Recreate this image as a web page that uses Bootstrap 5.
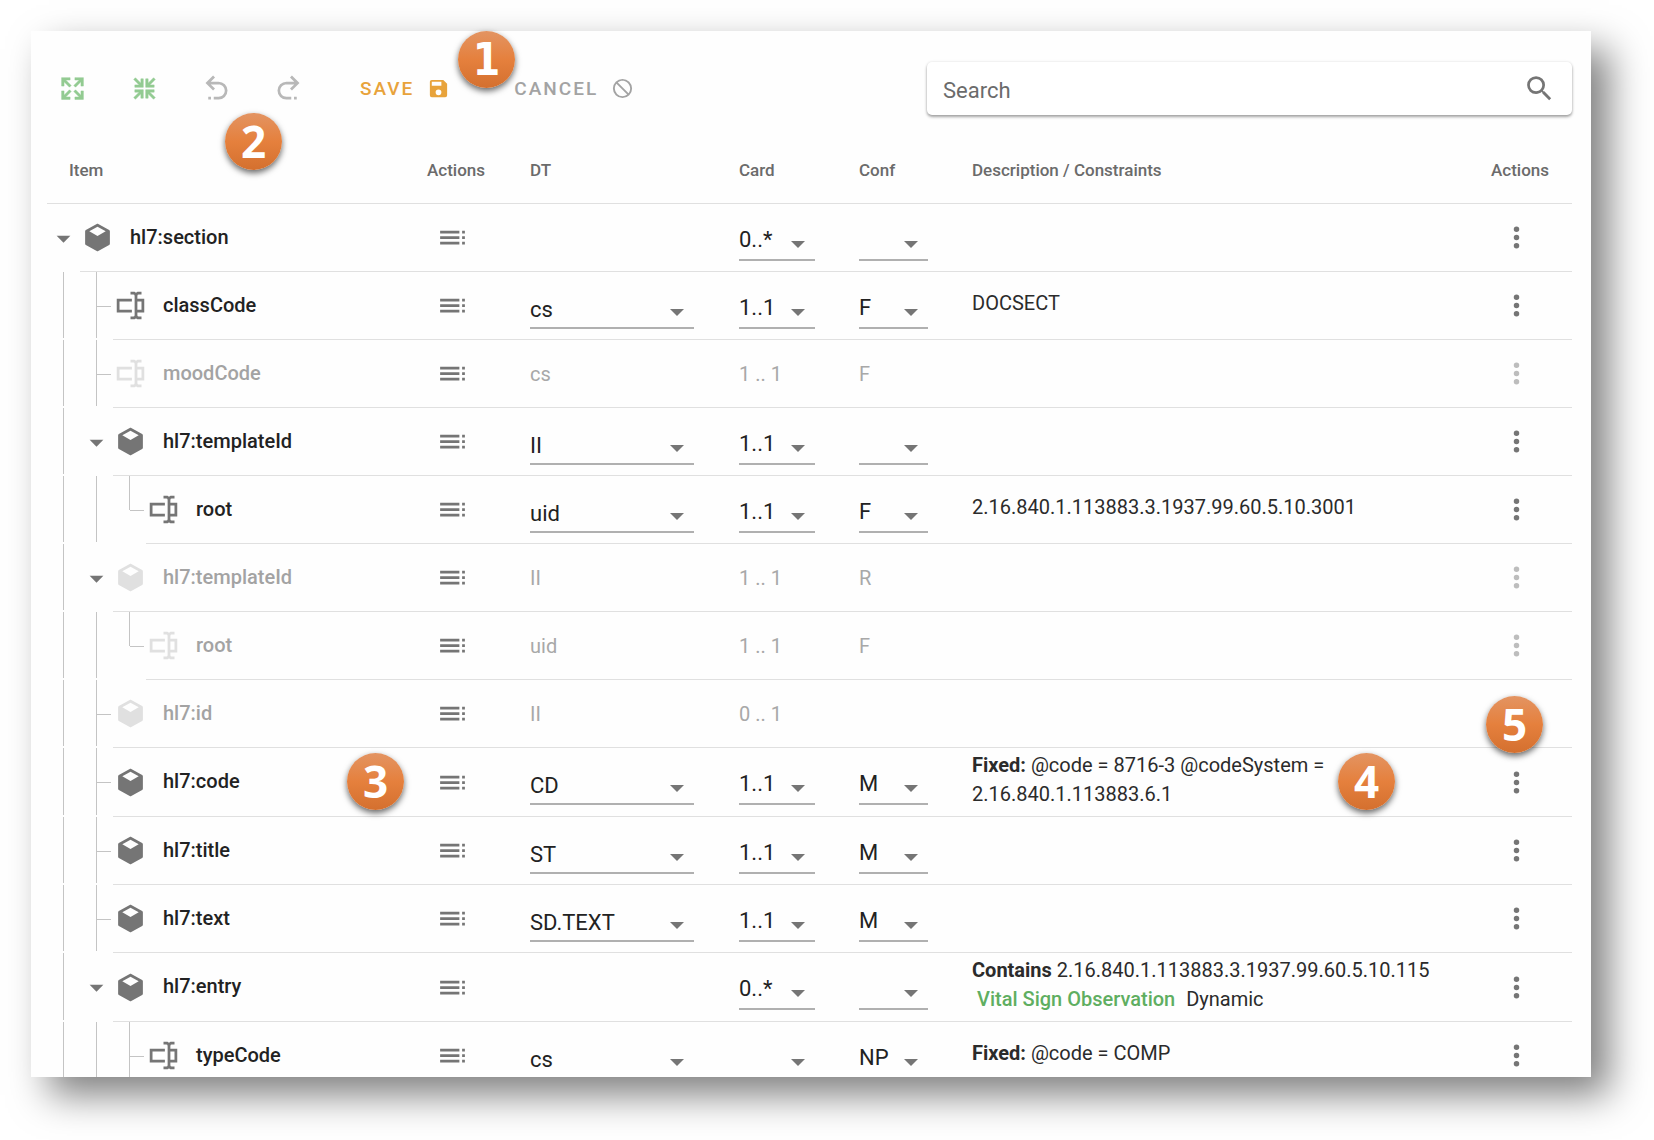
<!DOCTYPE html>
<html lang="en">
<head>
<meta charset="utf-8">
<meta name="viewport" content="width=device-width, initial-scale=1">
<title>Template editor</title>
<link href="https://cdn.jsdelivr.net/npm/bootstrap@5.3.0/dist/css/bootstrap.min.css" rel="stylesheet">
<style>
body{font-family:Roboto,"Liberation Sans",sans-serif;color:#222;background:#fff}
.stage{height:100vh;padding:31px 63px 63px 31px}
.sheet{background:#fefefe;box-shadow:18px 18px 36px rgba(0,0,0,.5)}
.sheet-body{padding:31px 19px 0 16px}
.ico{width:33px;height:33px;fill:currentColor;flex:none;display:block}
.ico-md{width:29px;height:29px}
.ico-sm{width:23px;height:23px}
.tools{padding-bottom:20px}
.tool{width:72px;border:0;background:none;padding:0;display:flex;justify-content:center}
.tool:first-child{margin-left:-11px}
.c-green{color:#93cb92}
.c-grey{color:#b8b8b8}
.txt-btn{border:0;background:none;padding:0;font-size:19px;line-height:24px;font-weight:500;letter-spacing:2px;display:flex;align-items:center;gap:13px}
.save{color:#e8a33b;margin-left:36px}
.cancel{color:#a3a3a3;margin-left:64px}
.find{width:645px;height:53px;border-radius:5px;background:#fff;padding:0 16px;box-shadow:0 2px 3px rgba(0,0,0,.35),0 0 3px rgba(0,0,0,.1);color:#757575}
.find input{border:0;outline:0;background:none;font-size:22px;line-height:30px;color:#333}
.find input::placeholder{color:#6b6b6b;opacity:1}
.find button{border:0;background:none;padding:0;color:#757575}
.tree{width:100%;table-layout:fixed;border-collapse:separate;border-spacing:0}
.tree th{height:69px;padding:2px 0 0 16px;font-size:17px;line-height:24px;font-weight:500;color:#6b6b6b;border-bottom:1px solid #e0e0e0}
.tree th:first-child{padding-left:22px}
.tree td{height:68px;padding:0 0 0 16px;border-bottom:1px solid #e0e0e0;vertical-align:middle}
.tree td:first-child{padding:0;border:0}
.c-item{width:364px}.c-act{width:103px}.c-dt{width:209px}.c-card{width:120px}.c-conf{width:113px}.c-more{width:97px}
.node{height:100%;display:flex;align-items:stretch}
.name{flex:1;display:flex;align-items:center;gap:16px;border-bottom:1px solid #e0e0e0;font-size:20px;line-height:28px;font-weight:500;color:#222;padding-left:1px}
.name span{padding-bottom:2px}
.name .ico{color:#757575}
.guide,.leaf,.end,.toggle{width:33px;flex:none;padding:0;border:0;background:none}
.guide,.leaf{background:linear-gradient(#c4c4c4,#c4c4c4) 16px 0/1px calc(100% - 2px) no-repeat}
.leaf{background:linear-gradient(#c4c4c4,#c4c4c4) 16px 0/1px calc(100% - 2px) no-repeat,linear-gradient(#c4c4c4,#c4c4c4) 17px 50%/14px 1px no-repeat}
.end{background:linear-gradient(#c4c4c4,#c4c4c4) 16px 0/1px 50% no-repeat,linear-gradient(#c4c4c4,#c4c4c4) 17px 50%/14px 1px no-repeat}
.toggle{color:#757575;display:flex;align-items:center}
.off .name{color:#a3a3a3}
.off .name .ico{color:#e0e0e0}
.off td{color:#a8a8a8;font-size:20px;line-height:28px}
.act{border:0;background:none;padding:0;color:#757575;display:block;margin-left:9px}
.off .act.more{color:#bdbdbd}
.pick{position:relative;display:block;height:36px;margin-top:10px;border-bottom:2px solid #b0b0b0}
.pick::after{content:"";position:absolute;right:10px;top:16px;border:7px solid transparent;border-top-color:#757575;border-bottom:0;pointer-events:none}
.pick select{appearance:none;border:0;outline:0;background:none;padding:0;width:100%;font-size:22px;line-height:30px;height:30px;color:#222;display:block}
.pick-dt{width:164px}.pick-card{width:76px}.pick-conf{width:69px}
.pick-dt select{height:34px}
.tree td.desc{font-size:20px;line-height:29px;padding:3px 0 7px 16px;color:#2b2b2b}
.desc b{font-weight:700}
.desc a{color:#5fae61;font-weight:500;text-decoration:none;margin:0 6px 0 5px}
.callout-dot{position:absolute;width:57px;height:57px;border-radius:50%;background:linear-gradient(#e39462,#e5803d 50%,#d4702f);color:#fff;font:700 44px/57px "Open Sans","Noto Sans",sans-serif;text-align:center;box-shadow:0 3px 6px rgba(0,0,0,.6)}
.dot-1{left:427px;top:0;font-family:"DejaVu Sans Condensed",Lato,sans-serif}
.dot-2{left:194px;top:82px}
.dot-3{left:316px;top:722px}
.dot-4{right:196px;top:722px}
.dot-5{right:48px;top:665px}
</style>
<script src="https://cdn.jsdelivr.net/npm/bootstrap@5.3.0/dist/js/bootstrap.bundle.min.js"></script>
</head>
<body>
<svg class="d-none" aria-hidden="true">
<symbol id="cube" viewBox="0 0 24 24"><path d="M21 16.5c0 .38-.21.71-.53.88l-7.9 4.44c-.16.12-.36.18-.57.18s-.41-.06-.57-.18l-7.9-4.44A.99.99 0 0 1 3 16.5v-9c0-.38.21-.71.53-.88l7.9-4.44c.16-.12.36-.18.57-.18s.41.06.57.18l7.9 4.44c.32.17.53.5.53.88v9M12 4.15 6.04 7.5 12 10.85l5.96-3.35L12 4.15z"/></symbol>
<symbol id="attr" viewBox="0 0 24 24"><path d="M17 7h5v10h-5v2a1 1 0 0 0 1 1h2v2h-2.5c-.55 0-1.5-.45-1.5-1 0 .55-.95 1-1.5 1H12v-2h2a1 1 0 0 0 1-1V5a1 1 0 0 0-1-1h-2V2h2.500c.55 0 1.5.45 1.500 1 0-.55.95-1 1.500-1H20v2h-2a1 1 0 0 0-1 1v2M2 7h11v2H4v6h9v2H2V7m18 8V9h-3v6h3z"/></symbol>
<symbol id="down" viewBox="0 0 24 24"><path d="m7 10 5 5 5-5H7z"/></symbol>
<symbol id="toc" viewBox="0 0 24 24"><path d="M3 9h14V7H3v2zm0 4h14v-2H3v2zm0 4h14v-2H3v2zm16 0h2v-2h-2v2zm0-10v2h2V7h-2zm0 6h2v-2h-2v2z"/></symbol>
<symbol id="dots" viewBox="0 0 24 24"><path d="M12 16a2 2 0 1 1 0 4 2 2 0 0 1 0-4m0-6a2 2 0 1 1 0 4 2 2 0 0 1 0-4m0-6a2 2 0 1 1 0 4 2 2 0 0 1 0-4z"/></symbol>
<symbol id="undo" viewBox="0 0 24 24"><path d="M13.500 7a6.500 6.500 0 0 1 0 13H10v-2h3.500C16 18 18 16 18 13.500S16 9 13.500 9H7.830l3.080 3.090L9.500 13.500 4 8l5.500-5.500 1.420 1.410L7.830 7h5.670M6 18h2v2H6v-2z"/></symbol>
</svg>
<div class="stage overflow-hidden">
<main class="sheet position-relative h-100">
<div class="sheet-body h-100 overflow-hidden">
<div class="tools d-flex align-items-center">
<button class="tool c-green" aria-label="Expand all"><svg class="ico ico-md" viewBox="0 0 24 24"><path d="M9.500 13.090 10.910 14.500 6.410 19H10v2H3v-7h2v3.590l4.500-4.500M10.910 9.500 9.500 10.910 5 6.410V10H3V3h7v2H6.410l4.500 4.500m3.590 3.590 4.500 4.500V14h2v7h-7v-2h3.590l-4.500-4.500 1.410-1.410M13.090 9.500l4.500-4.500H14V3h7v7h-2V6.410l-4.500 4.500-1.410-1.410z" stroke="currentColor" stroke-width=".4"/></svg></button>
<button class="tool c-green" aria-label="Collapse all"><svg class="ico ico-md" viewBox="0 0 24 24"><path d="M19.500 3.090 20.910 4.500 16.410 9H20v2h-7V4h2v3.590l4.500-4.500M20.910 19.500l-1.410 1.410-4.500-4.500V20h-2v-7h7v2h-3.590l4.500 4.500M4.500 3.090 9 7.590V4h2v7H4V9h3.590l-4.500-4.500L4.500 3.090M3.090 19.500l4.500-4.500H4v-2h7v7H9v-3.590l-4.500 4.500-1.410-1.410z" stroke="currentColor" stroke-width=".4"/></svg></button>
<button class="tool c-grey" aria-label="Undo"><svg class="ico"><use href="#undo"/></svg></button>
<button class="tool c-grey" aria-label="Redo"><svg class="ico" viewBox="0 0 24 24"><path d="M10.500 7a6.500 6.500 0 0 0 0 13H14v-2h-3.500C8 18 6 16 6 13.500S8 9 10.500 9h5.670l-3.080 3.090 1.410 1.410L20 8l-5.500-5.500-1.420 1.410L16.170 7H10.500M18 18h-2v2h2v-2z"/></svg></button>
<button class="txt-btn save">SAVE<svg class="ico ico-sm" viewBox="0 0 24 24"><path d="M15 9H5V5h10m-3 14a3 3 0 1 1 0-6 3 3 0 0 1 0 6m5-16H5a2 2 0 0 0-2 2v14a2 2 0 0 0 2 2h14a2 2 0 0 0 2-2V7l-4-4z"/></svg></button>
<button class="txt-btn cancel">CANCEL<svg class="ico ico-sm" viewBox="0 0 24 24"><path d="M12 2a10 10 0 1 0 0 20 10 10 0 0 0 0-20m0 2c1.850 0 3.550.63 4.900 1.690 1.890 1.490 3.100 3.760 3.100 6.310 0 1.850-.63 3.550-1.690 4.900L7.100 5.690C8.450 4.630 10.150 4 12 4M5.690 7.100 16.900 18.310A7.900 7.900 0 0 1 12 20a8 8 0 0 1-8-8c0-1.850.63-3.550 1.690-4.900z"/></svg></button>
<form class="find d-flex align-items-center ms-auto" role="search">
<input class="flex-grow-1 p-0 pt-1" type="text" placeholder="Search" aria-label="Search">
<button type="button" aria-label="Find"><svg class="ico" viewBox="0 0 24 24"><path d="M15.500 14h-.79l-.28-.27A6.470 6.470 0 0 0 16 9.500 6.500 6.500 0 1 0 9.500 16c1.610 0 3.090-.59 4.230-1.570l.27.28v.79l5 4.990L20.490 19l-4.990-5zm-6 0C7.010 14 5 11.990 5 9.500S7.010 5 9.500 5 14 7.010 14 9.500 11.990 14 9.500 14z"/></svg></button>
</form>
</div>
<table class="tree">
<colgroup><col class="c-item"><col class="c-act"><col class="c-dt"><col class="c-card"><col class="c-conf"><col><col class="c-more"></colgroup>
<thead><tr><th>Item</th><th>Actions</th><th>DT</th><th>Card</th><th>Conf</th><th>Description / Constraints</th><th>Actions</th></tr></thead>
<tbody>
<tr><td><div class="node"><button class="toggle" aria-label="Toggle"><svg class="ico"><use href="#down"/></svg></button><div class="name"><svg class="ico"><use href="#cube"/></svg><span>hl7:section</span></div></div></td>
<td><button class="act list" aria-label="Row actions"><svg class="ico"><use href="#toc"/></svg></button></td><td></td>
<td><label class="pick pick-card"><select aria-label="Card"><option>0..*</option></select></label></td><td><label class="pick pick-conf"><select aria-label="Conf"><option></option></select></label></td><td class="desc"></td>
<td><button class="act more" aria-label="More"><svg class="ico"><use href="#dots"/></svg></button></td></tr>

<tr><td><div class="node"><i class="guide"></i><i class="leaf"></i><div class="name"><svg class="ico"><use href="#attr"/></svg><span>classCode</span></div></div></td>
<td><button class="act list" aria-label="Row actions"><svg class="ico"><use href="#toc"/></svg></button></td><td><label class="pick pick-dt"><select aria-label="DT"><option>cs</option></select></label></td>
<td><label class="pick pick-card"><select aria-label="Card"><option>1..1</option></select></label></td><td><label class="pick pick-conf"><select aria-label="Conf"><option>F</option></select></label></td><td class="desc">DOCSECT</td>
<td><button class="act more" aria-label="More"><svg class="ico"><use href="#dots"/></svg></button></td></tr>

<tr class="off"><td><div class="node"><i class="guide"></i><i class="leaf"></i><div class="name"><svg class="ico"><use href="#attr"/></svg><span>moodCode</span></div></div></td>
<td><button class="act list" aria-label="Row actions"><svg class="ico"><use href="#toc"/></svg></button></td><td>cs</td><td>1 .. 1</td><td>F</td><td></td>
<td><button class="act more" aria-label="More"><svg class="ico"><use href="#dots"/></svg></button></td></tr>

<tr><td><div class="node"><i class="guide"></i><button class="toggle" aria-label="Toggle"><svg class="ico"><use href="#down"/></svg></button><div class="name"><svg class="ico"><use href="#cube"/></svg><span>hl7:templateId</span></div></div></td>
<td><button class="act list" aria-label="Row actions"><svg class="ico"><use href="#toc"/></svg></button></td><td><label class="pick pick-dt"><select aria-label="DT"><option>II</option></select></label></td>
<td><label class="pick pick-card"><select aria-label="Card"><option>1..1</option></select></label></td><td><label class="pick pick-conf"><select aria-label="Conf"><option></option></select></label></td><td class="desc"></td>
<td><button class="act more" aria-label="More"><svg class="ico"><use href="#dots"/></svg></button></td></tr>

<tr><td><div class="node"><i class="guide"></i><i class="guide"></i><i class="end"></i><div class="name"><svg class="ico"><use href="#attr"/></svg><span>root</span></div></div></td>
<td><button class="act list" aria-label="Row actions"><svg class="ico"><use href="#toc"/></svg></button></td><td><label class="pick pick-dt"><select aria-label="DT"><option>uid</option></select></label></td>
<td><label class="pick pick-card"><select aria-label="Card"><option>1..1</option></select></label></td><td><label class="pick pick-conf"><select aria-label="Conf"><option>F</option></select></label></td><td class="desc">2.16.840.1.113883.3.1937.99.60.5.10.3001</td>
<td><button class="act more" aria-label="More"><svg class="ico"><use href="#dots"/></svg></button></td></tr>

<tr class="off"><td><div class="node"><i class="guide"></i><button class="toggle" aria-label="Toggle"><svg class="ico"><use href="#down"/></svg></button><div class="name"><svg class="ico"><use href="#cube"/></svg><span>hl7:templateId</span></div></div></td>
<td><button class="act list" aria-label="Row actions"><svg class="ico"><use href="#toc"/></svg></button></td><td>II</td><td>1 .. 1</td><td>R</td><td></td>
<td><button class="act more" aria-label="More"><svg class="ico"><use href="#dots"/></svg></button></td></tr>

<tr class="off"><td><div class="node"><i class="guide"></i><i class="guide"></i><i class="end"></i><div class="name"><svg class="ico"><use href="#attr"/></svg><span>root</span></div></div></td>
<td><button class="act list" aria-label="Row actions"><svg class="ico"><use href="#toc"/></svg></button></td><td>uid</td><td>1 .. 1</td><td>F</td><td></td>
<td><button class="act more" aria-label="More"><svg class="ico"><use href="#dots"/></svg></button></td></tr>

<tr class="off"><td><div class="node"><i class="guide"></i><i class="leaf"></i><div class="name"><svg class="ico"><use href="#cube"/></svg><span>hl7:id</span></div></div></td>
<td><button class="act list" aria-label="Row actions"><svg class="ico"><use href="#toc"/></svg></button></td><td>II</td><td>0 .. 1</td><td></td><td></td>
<td><button class="act more" aria-label="More"><svg class="ico"><use href="#dots"/></svg></button></td></tr>

<tr><td><div class="node"><i class="guide"></i><i class="leaf"></i><div class="name"><svg class="ico"><use href="#cube"/></svg><span>hl7:code</span></div></div></td>
<td><button class="act list" aria-label="Row actions"><svg class="ico"><use href="#toc"/></svg></button></td><td><label class="pick pick-dt"><select aria-label="DT"><option>CD</option></select></label></td>
<td><label class="pick pick-card"><select aria-label="Card"><option>1..1</option></select></label></td><td><label class="pick pick-conf"><select aria-label="Conf"><option>M</option></select></label></td><td class="desc"><div><b>Fixed:</b> @code = 8716-3 @codeSystem =</div><div>2.16.840.1.113883.6.1</div></td>
<td><button class="act more" aria-label="More"><svg class="ico"><use href="#dots"/></svg></button></td></tr>

<tr><td><div class="node"><i class="guide"></i><i class="leaf"></i><div class="name"><svg class="ico"><use href="#cube"/></svg><span>hl7:title</span></div></div></td>
<td><button class="act list" aria-label="Row actions"><svg class="ico"><use href="#toc"/></svg></button></td><td><label class="pick pick-dt"><select aria-label="DT"><option>ST</option></select></label></td>
<td><label class="pick pick-card"><select aria-label="Card"><option>1..1</option></select></label></td><td><label class="pick pick-conf"><select aria-label="Conf"><option>M</option></select></label></td><td class="desc"></td>
<td><button class="act more" aria-label="More"><svg class="ico"><use href="#dots"/></svg></button></td></tr>

<tr><td><div class="node"><i class="guide"></i><i class="leaf"></i><div class="name"><svg class="ico"><use href="#cube"/></svg><span>hl7:text</span></div></div></td>
<td><button class="act list" aria-label="Row actions"><svg class="ico"><use href="#toc"/></svg></button></td><td><label class="pick pick-dt"><select aria-label="DT"><option>SD.TEXT</option></select></label></td>
<td><label class="pick pick-card"><select aria-label="Card"><option>1..1</option></select></label></td><td><label class="pick pick-conf"><select aria-label="Conf"><option>M</option></select></label></td><td class="desc"></td>
<td><button class="act more" aria-label="More"><svg class="ico"><use href="#dots"/></svg></button></td></tr>

<tr><td><div class="node"><i class="guide"></i><button class="toggle" aria-label="Toggle"><svg class="ico"><use href="#down"/></svg></button><div class="name"><svg class="ico"><use href="#cube"/></svg><span>hl7:entry</span></div></div></td>
<td><button class="act list" aria-label="Row actions"><svg class="ico"><use href="#toc"/></svg></button></td><td></td>
<td><label class="pick pick-card"><select aria-label="Card"><option>0..*</option></select></label></td><td><label class="pick pick-conf"><select aria-label="Conf"><option></option></select></label></td><td class="desc"><div><b>Contains</b> 2.16.840.1.113883.3.1937.99.60.5.10.115</div><div><a href="#">Vital Sign Observation</a> Dynamic</div></td>
<td><button class="act more" aria-label="More"><svg class="ico"><use href="#dots"/></svg></button></td></tr>

<tr><td><div class="node"><i class="guide"></i><i class="guide"></i><i class="leaf"></i><div class="name"><svg class="ico"><use href="#attr"/></svg><span>typeCode</span></div></div></td>
<td><button class="act list" aria-label="Row actions"><svg class="ico"><use href="#toc"/></svg></button></td><td><label class="pick pick-dt"><select aria-label="DT"><option>cs</option></select></label></td>
<td><label class="pick pick-card"><select aria-label="Card"><option></option></select></label></td><td><label class="pick pick-conf"><select aria-label="Conf"><option>NP</option></select></label></td><td class="desc"><b>Fixed:</b> @code = COMP</td>
<td><button class="act more" aria-label="More"><svg class="ico"><use href="#dots"/></svg></button></td></tr>
</tbody>
</table>
</div>
<span class="callout-dot dot-1">1</span>
<span class="callout-dot dot-2">2</span>
<span class="callout-dot dot-3">3</span>
<span class="callout-dot dot-4">4</span>
<span class="callout-dot dot-5">5</span>
</main>
</div>
</body>
</html>
